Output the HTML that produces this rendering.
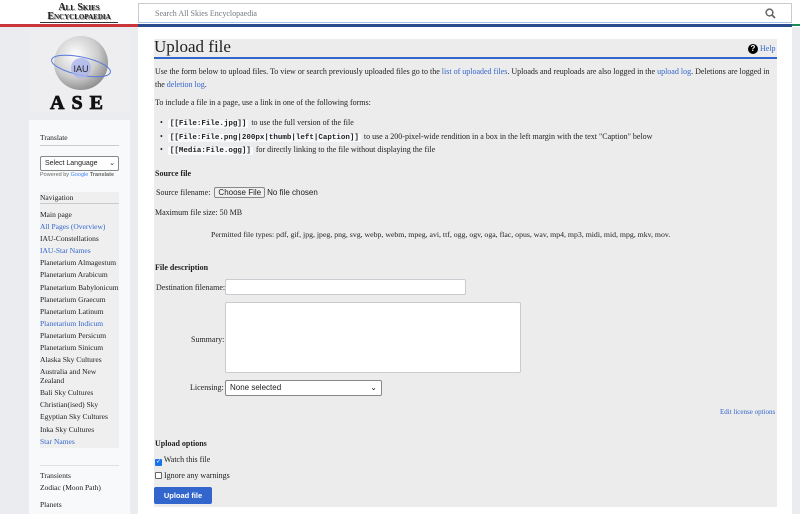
<!DOCTYPE html>
<html><head><meta charset="utf-8"><style>
*{box-sizing:border-box}
body{margin:0;width:800px;height:514px;overflow:hidden;background:#eaecf0;font-family:"Liberation Serif",serif;font-size:8px;color:#202122;position:relative}
a{color:#3366cc;text-decoration:none}
.abs{position:absolute}
#top{left:0;top:0;width:800px;height:27px;background:#fff}
#redline{left:0;top:24px;width:138px;height:3px;background:#c8353a}
#blueline{left:138px;top:21px;width:654px;height:6px;background:linear-gradient(#a7c4ee 0,#a7c4ee 2px,#fff 2px,#fff 3px,#2a4b8d 3px,#2a4b8d 5px)}
#green{left:792px;top:24px;width:8px;height:2px;background:#1a8a5a}
#search{left:138px;top:3px;width:654px;height:19px;border:1px solid #c8ccd1;border-bottom:none;background:#fff;color:#72777d;font-size:8px;padding:5px 16px}
#logo1{left:40px;top:3px;width:78px;text-align:center;font-weight:bold;font-size:10px;line-height:9px;font-variant:small-caps;color:#222;text-shadow:1px 1px 0 #999}
#logoarea{left:29px;top:30px;width:101px;height:82px;background:#eeeef0}
#panel{left:29px;top:120px;width:101px;height:394px;background:#f8f9fa}
#main{left:138px;top:27px;width:654px;height:487px;background:#fff}
#content{left:154px;top:39px;width:623px;height:468px;background:#ececec}
h1{position:absolute;left:154px;top:37px;margin:0;font-weight:normal;font-size:17px;font-family:"Liberation Serif",serif}
#h1line{left:154px;top:57px;width:623px;height:2px;background:#3366cc}
.side{font-size:7.5px;line-height:12.1px}
.side div{white-space:nowrap}
code{font-family:"Liberation Mono",monospace;font-size:7.5px;background:#f8f9fa;border:1px solid #eaecf0;padding:0 2px;font-weight:bold}
.inp{background:#fff;border:1px solid #c8ccd1;border-radius:2px}
b{font-weight:bold}
</style></head><body>
<div class="abs" id="top"></div>
<div class="abs" id="redline"></div>
<div class="abs" id="blueline"></div>
<div class="abs" id="green"></div>
<div class="abs" id="search">Search All Skies Encyclopaedia
<svg class="abs" style="left:626px;top:4px" width="11" height="11" viewBox="0 0 11 11"><circle cx="4.5" cy="4.5" r="3.4" fill="none" stroke="#666" stroke-width="1.5"/><path d="M7 7L10 10" stroke="#666" stroke-width="1.8"/></svg></div>
<div class="abs" id="logo1">All Skies<br>Encyclopaedia<div style="height:1px;background:#333;margin-top:1px"></div></div>
<div class="abs" id="logoarea">
<svg width="101" height="82" viewBox="0 0 101 82">
<defs><radialGradient id="g" cx="0.4" cy="0.35" r="0.7"><stop offset="0" stop-color="#fff"/><stop offset="0.6" stop-color="#ccc"/><stop offset="1" stop-color="#888"/></radialGradient></defs>
<circle cx="52" cy="33" r="27" fill="url(#g)"/>
<ellipse cx="52" cy="36" rx="30" ry="9" fill="none" stroke="#5577dd" stroke-width="1" transform="rotate(12 52 36)"/>
<circle cx="52" cy="38" r="10" fill="#aab4ee" opacity="0.8"/>
<text x="52" y="42" font-family="Liberation Sans" font-size="9" text-anchor="middle" fill="#222">IAU</text>
<text x="51" y="79" font-family="Liberation Serif" font-weight="bold" font-size="20" text-anchor="middle" fill="#111" letter-spacing="7" stroke="#111" stroke-width="0.8">ASE</text>
</svg></div>
<div class="abs" id="panel"></div>
<div class="abs side" style="left:40px;top:132px;width:79px">
<div style="border-bottom:1px solid #c8ccd1;padding-bottom:1px">Translate</div>
<div class="inp" style="margin-top:10px;height:15px;border-color:#888;font-family:'Liberation Sans';font-size:7px;line-height:13px;padding-left:4px">Select Language<span style="float:right;padding-right:3px">⌄</span></div>
<div style="font-family:'Liberation Sans';font-size:5.5px;line-height:8px;color:#666">Powered by <span style="color:#4285f4">Google</span> <b>Translate</b></div>
</div>
<div class="abs side" style="left:40px;top:192px;width:79px;background:#efeff0;height:256px">
<div style="border-bottom:1px solid #c8ccd1;line-height:11px">Navigation</div>
<div style="margin-top:5px">Main page</div>
<div><a>All Pages (Overview)</a></div>
<div>IAU-Constellations</div>
<div><a>IAU-Star Names</a></div>
<div>Planetarium Almagestum</div>
<div>Planetarium Arabicum</div>
<div>Planetarium Babylonicum</div>
<div>Planetarium Graecum</div>
<div>Planetarium Latinum</div>
<div><a>Planetarium Indicum</a></div>
<div>Planetarium Persicum</div>
<div>Planetarium Sinicum</div>
<div>Alaska Sky Cultures</div>
<div style="line-height:8.5px;white-space:normal;width:62px;padding:2px 0">Australia and New Zealand</div>
<div>Bali Sky Cultures</div>
<div>Christian(ised) Sky</div>
<div>Egyptian Sky Cultures</div>
<div>Inka Sky Cultures</div>
<div><a>Star Names</a></div>
</div>
<div class="abs" style="left:40px;top:465px;width:79px;height:1px;background:#dfe0e2"></div>
<div class="abs side" style="left:40px;top:470px">
<div>Transients</div><div>Zodiac (Moon Path)</div>
<div style="margin-top:5px">Planets</div></div>
<div class="abs" id="main"></div>
<div class="abs" id="content"></div>
<h1>Upload file</h1>
<div class="abs" id="h1line"></div>
<div class="abs" style="left:748px;top:44px;font-size:8px"><span style="display:inline-block;width:10px;height:10px;border-radius:5px;background:#000;color:#fff;text-align:center;font-weight:bold;font-size:8px;line-height:10px;font-family:'Liberation Sans'">?</span> <a>Help</a></div>
<div class="abs" style="left:155px;top:66px;width:620px;line-height:12.5px">Use the form below to upload files. To view or search previously uploaded files go to the <a>list of uploaded files</a>. Uploads and reuploads are also logged in the <a>upload log</a>. Deletions are logged in the <a>deletion log</a>.</div>
<div class="abs" style="left:155px;top:98px">To include a file in a page, use a link in one of the following forms:</div>
<div class="abs" style="left:160px;top:117px;line-height:12.5px">
<div>• &nbsp;<code>[[File:File.jpg]]</code> to use the full version of the file</div>
<div>• &nbsp;<code>[[File:File.png|200px|thumb|left|Caption]]</code> to use a 200-pixel-wide rendition in a box in the left margin with the text "Caption" below</div>
<div>• &nbsp;<code>[[Media:File.ogg]]</code> for directly linking to the file without displaying the file</div>
</div>
<div class="abs" style="left:155px;top:169px"><b>Source file</b></div>
<div class="abs" style="left:156px;top:187px">Source filename: &nbsp;<span style="display:inline-block;font-family:'Liberation Sans';font-size:8px;border:1px solid #888;background:#efefef;padding:0 3px;border-radius:2px">Choose File</span> <span style="font-family:'Liberation Sans';font-size:8px">No file chosen</span></div>
<div class="abs" style="left:155px;top:208px">Maximum file size: 50 MB</div>
<div class="abs" style="left:211px;top:230px;font-size:7.8px">Permitted file types: pdf, gif, jpg, jpeg, png, svg, webp, webm, mpeg, avi, ttf, ogg, ogv, oga, flac, opus, wav, mp4, mp3, midi, mid, mpg, mkv, mov.</div>
<div class="abs" style="left:155px;top:263px"><b>File description</b></div>
<div class="abs" style="left:156px;top:283px">Destination filename:</div>
<div class="abs inp" style="left:225px;top:279px;width:241px;height:16px"></div>
<div class="abs" style="left:191px;top:335px">Summary:</div>
<div class="abs inp" style="left:225px;top:302px;width:296px;height:71px"></div>
<div class="abs" style="left:190px;top:383px">Licensing:</div>
<div class="abs inp" style="left:225px;top:380px;width:157px;height:16px;border-color:#888;font-family:'Liberation Sans';font-size:8px;line-height:14px;padding-left:4px">None selected<span style="float:right;padding-right:4px">⌄</span></div>
<div class="abs" style="left:720px;top:408px;font-size:7px"><a>Edit license options</a></div>
<div class="abs" style="left:155px;top:439px"><b>Upload options</b></div>
<div class="abs" style="left:155px;top:455px"><span style="display:inline-block;width:7px;height:7px;background:#1a73e8;border-radius:1px;vertical-align:-1px;color:#fff;font-size:6px;line-height:7px;text-align:center">✓</span> Watch this file</div>
<div class="abs" style="left:155px;top:471px"><span style="display:inline-block;width:7px;height:7px;border:1px solid #666;background:#fff;border-radius:1px;vertical-align:-1px"></span> Ignore any warnings</div>
<div class="abs" style="left:154px;top:487px;width:58px;height:17px;background:#3366cc;border-radius:2px;color:#fff;font-family:'Liberation Sans';font-weight:bold;font-size:7.5px;text-align:center;line-height:17px">Upload file</div>
</body></html>
